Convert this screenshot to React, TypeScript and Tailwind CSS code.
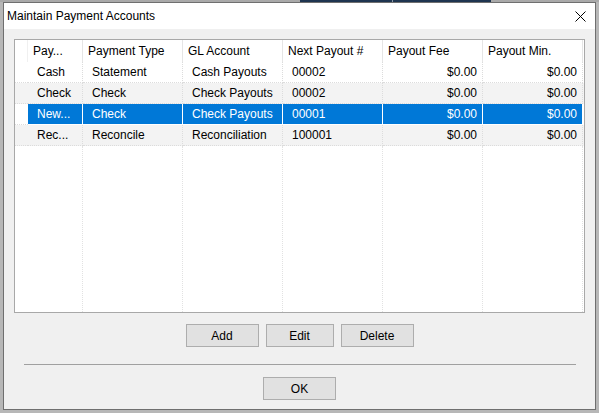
import React from 'react';

type Row = {
  name: string;
  type: string;
  gl: string;
  next: string;
  fee: string;
  min: string;
};

const rows: Row[] = [
  { name: 'Cash', type: 'Statement', gl: 'Cash Payouts', next: '00002', fee: '$0.00', min: '$0.00' },
  { name: 'Check', type: 'Check', gl: 'Check Payouts', next: '00002', fee: '$0.00', min: '$0.00' },
  { name: 'New...', type: 'Check', gl: 'Check Payouts', next: '00001', fee: '$0.00', min: '$0.00' },
  { name: 'Rec...', type: 'Reconcile', gl: 'Reconciliation', next: '100001', fee: '$0.00', min: '$0.00' },
];

const selectedIndex = 2;

const columns = [
  { label: 'Pay...', width: 'w-[55px]', right: false },
  { label: 'Payment Type', width: 'w-[100px]', right: false },
  { label: 'GL Account', width: 'w-[100px]', right: false },
  { label: 'Next Payout #', width: 'w-[100px]', right: false },
  { label: 'Payout Fee', width: 'w-[100px]', right: true },
  { label: 'Payout Min.', width: 'w-[100px]', right: true },
];

const CloseIcon = () => (
  <svg width="11" height="11" viewBox="0 0 11 11" className="block">
    <path d="M0.5 0.5 L10.5 10.5 M10.5 0.5 L0.5 10.5" stroke="#000" strokeWidth="1" fill="none" />
  </svg>
);

const DialogButton = ({ label, width }: { label: string; width: string }) => (
  <button
    className={`${width} h-[23px] border border-[#adadad] bg-[#e1e1e1] text-[12px] text-black flex items-center justify-center`}
  >
    {label}
  </button>
);

const AccountsGrid = () => (
  <div className="w-[571px] h-[274px] border border-[#a8a8a8] bg-white flex flex-col">
    {/* header */}
    <div className="flex h-[22px] shrink-0">
      <div className="w-[13px] h-full border-r border-[#f0f0f0]" />
      {columns.map((c) => (
        <div
          key={c.label}
          className={`${c.width} h-full border-r border-[#e5e5e5] flex items-center pl-[5px] whitespace-nowrap overflow-hidden`}
        >
          {c.label}
        </div>
      ))}
    </div>

    {rows.map((r, i) => {
      const selected = i === selectedIndex;
      const stripe = i % 2 === 1 ? 'bg-[#f3f3f3]' : 'bg-white';
      const values = [r.name, r.type, r.gl, r.next, r.fee, r.min];
      return (
        <div key={i} className={`flex h-[21px] shrink-0 ${stripe}`}>
          <div className={`w-[13px] h-full border-b border-dotted border-[#dcdcdc] ${selected ? 'bg-white' : ''}`} />
          {columns.map((c, j) => (
            <div
              key={c.label}
              className={`${c.width} h-full flex items-center whitespace-nowrap overflow-hidden ${
                c.right ? 'justify-end pr-[5px]' : 'pl-[9px]'
              } ${
                selected
                  ? 'bg-[#0078d7] text-white border-r border-white border-b border-b-[#ffffff]'
                  : 'border-r border-b border-dotted border-[#dcdcdc]'
              }`}
            >
              {values[j]}
            </div>
          ))}
        </div>
      );
    })}

    {/* empty area keeps the column guides */}
    <div className="flex flex-1">
      <div className="w-[13px]" />
      {columns.map((c) => (
        <div key={c.label} className={`${c.width} h-full border-r border-dotted border-[#e2e2e2]`} />
      ))}
    </div>
  </div>
);

export default function App() {
  return (
    <div
      className="w-[599px] h-[413px] bg-[#b7b7b7] flex flex-col text-[12px] text-black"
      style={{ fontFamily: '"Liberation Sans", Arial, sans-serif' }}
    >
      <div className="flex h-[2px] shrink-0">
        <div className="w-[300px] bg-[#a9a9a9]" />
        <div className="w-[92px] bg-[#1f3550]" />
        <div className="w-[1px] bg-[#8a96a4]" />
        <div className="w-[98px] bg-[#1f3550]" />
        <div className="flex-1 bg-[#a9a9a9]" />
      </div>
      <div className="flex">
        <div className="w-[3px] shrink-0" />
        <div className="w-[593px] h-[408px] border border-[#6f6f6f] flex flex-col bg-[#f0f0f0]">
          {/* title bar */}
          <div className="h-[26px] shrink-0 bg-white flex items-center justify-between pl-[3px] pr-[9px]">
            <span>Maintain Payment Accounts</span>
            <CloseIcon />
          </div>

          <div className="flex flex-col pt-[10px] px-[10px]">
            <AccountsGrid />
          </div>

          <div className="flex justify-center gap-[7px] mt-[11px]">
            <DialogButton label="Add" width="w-[73px]" />
            <DialogButton label="Edit" width="w-[68px]" />
            <DialogButton label="Delete" width="w-[73px]" />
          </div>

          <div className="ml-[20px] w-[552px] h-[1px] bg-[#a0a0a0] mt-[17px]" />

          <div className="flex justify-center mt-[12px]">
            <DialogButton label="OK" width="w-[73px]" />
          </div>
        </div>
      </div>
    </div>
  );
}
